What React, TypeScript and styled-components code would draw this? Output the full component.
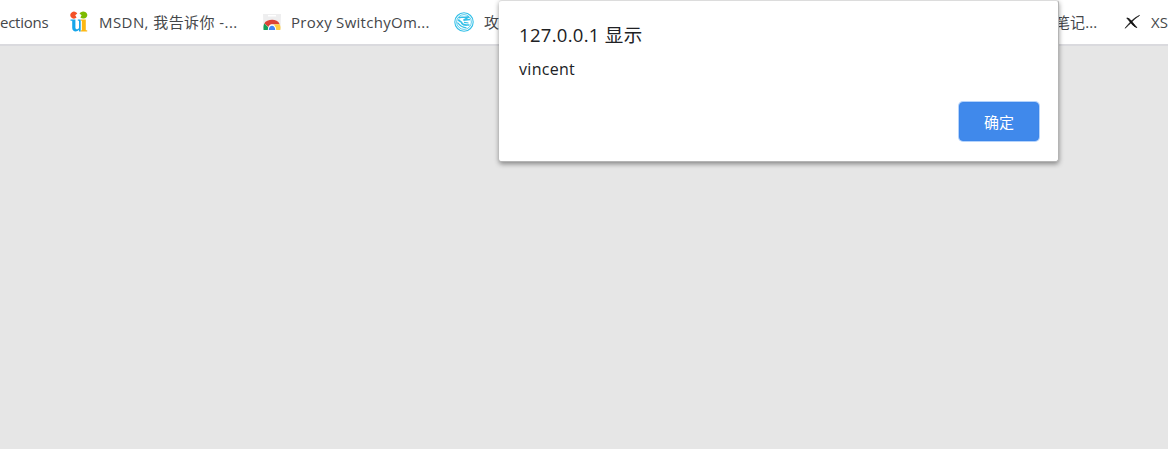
import React from "react";
import styled, { createGlobalStyle } from "styled-components";

const GlobalStyle = createGlobalStyle`
  * { box-sizing: border-box; }
  body {
    margin: 0;
    overflow: hidden;
    background: #e6e6e6;
    font-family: "Open Sans", "Noto Sans CJK SC", sans-serif;
  }
`;

const Page = styled.div`
  position: relative;
  width: 100%;
  height: 100vh;
  overflow: hidden;
  background: #e6e6e6;
`;

const BookmarkBar = styled.nav`
  display: flex;
  justify-content: space-between;
  height: 46px;
  background: #fff;
  border-bottom: 2px solid #dadade;
`;

const Group = styled.div`
  display: flex;
  align-items: center;
  height: 44px;
`;

const Bookmark = styled.div<{ $width: number }>`
  display: flex;
  align-items: center;
  flex: none;
  width: ${(p) => p.$width}px;
  height: 44px;
  overflow: hidden;

  svg {
    display: block;
    flex: none;
    margin-right: 10px;
  }
`;

const Label = styled.span<{ $spacing?: number }>`
  font-size: 15px;
  line-height: 22px;
  letter-spacing: ${(p) => p.$spacing ?? 0}px;
  white-space: nowrap;
  color: #45474a;
`;

const Dialog = styled.section`
  position: absolute;
  top: 0;
  left: 499px;
  display: flex;
  flex-direction: column;
  width: 560px;
  height: 162px;
  padding: 21px 19px 20px 20px;
  background: #fff;
  border: 1px solid #b4b4b4;
  border-width: 1px 1px 1px 0;
  border-top-color: #dcdcdc;
  border-radius: 3px;
  box-shadow: 0 2px 5px rgba(0, 0, 0, 0.42);
`;

const Title = styled.h1`
  margin: 0;
  font-size: 18.5px;
  font-weight: 400;
  line-height: 26px;
  letter-spacing: 0.3px;
  color: #202124;
`;

const Message = styled.p`
  margin: 9px 0 0;
  font-size: 16px;
  line-height: 24px;
  letter-spacing: 0.3px;
  color: #202124;
`;

const Confirm = styled.button`
  align-self: flex-end;
  width: 80px;
  height: 40px;
  margin-top: 21px;
  padding: 0;
  border: 1px solid #3c86ea;
  border-radius: 4px;
  box-shadow: 0 0 0 1px #b5d3fb;
  background: #4089eb;
  color: #fff;
  font: 15px "Noto Sans CJK SC", sans-serif;
`;

const MsdnIcon = () => (
  <svg width="20" height="22" viewBox="0 0 20 22">
    <path d="M6.2 4.2L8.3 2.6A3.7 3.5 0 1 0 7.6 6.6Z" fill="#f45127" />
    <path d="M12.6 4.2L10.5 2.6A4.1 3.5 0 1 1 11.4 6.6Z" fill="#7cbb00" />
    <path d="M1.5 8.4H6.4V16.5C6.4 19 9 18.6 10 17V9.8H8.8V8.4H11.7V20.4H10V18.8C7.6 21.6 3.2 20.6 3.2 17V9.8H1.5Z" fill="#16a5ea" />
    <path d="M11.9 8.4H16.8V19.3H18.2V20.6H11.7V19.3H12.9V9.8H11.9Z" fill="#fdb813" />
  </svg>
);

const ChromeStoreIcon = () => (
  <svg width="18" height="18" viewBox="0 0 18 18">
    <path d="M0 1H18L17.5 17H.5Z" fill="#eeeeef" />
    <path d="M5 2H13V3.5H5Z" fill="#fff" />
    <path d="M1.3 10.4C3.5 6.3 14 4.8 16.7 11.2H9C7 11.2 5.9 12.7 5.7 14Z" fill="#dc4437" />
    <path d="M1.3 10.4C.5 12 .2 14 .6 17H7L5.3 14.2Z" fill="#159e58" />
    <path d="M11.3 11.2H16.7C17.6 13 17.7 15 17.2 17H11.5Z" fill="#ffce42" />
    <path d="M4.8 17C4.8 9.6 13.2 9.6 13.2 17Z" fill="#fff" />
    <path d="M5.8 17C5.8 11.2 12.2 11.2 12.2 17Z" fill="#4287f5" />
  </svg>
);

const WaveIcon = () => (
  <svg width="20" height="20" viewBox="0 0 20 20" fill="none" stroke="#35c0e8">
    <circle cx="10" cy="10" r="9.2" strokeWidth="1.1" />
    <circle cx="10" cy="10" r="7.4" strokeWidth=".8" />
    <path d="M4.5 6C7 4 10 6.3 15 4.8L9.5 8.2L16 7.6" strokeWidth="1.5" />
    <path d="M4.2 7.5C5.5 10 8 9 8 11.5C9.5 13.8 12 12.8 15.5 13" strokeWidth="1.7" />
    <path d="M3.5 10.5C5.5 13 7 15.5 12.5 15.8M10 10.4L14.5 11" strokeWidth="1.1" />
  </svg>
);

const CrossIcon = () => (
  <svg width="17" height="18" viewBox="0 0 17 18" fill="#111">
    <path d="M2.8 5C6.5 5.4 7.8 9 12.8 14.6C8.2 13 6.8 9 2.8 5Z" stroke="#111" strokeWidth=".9" />
    <path d="M15.6 2.4C10.8 4.4 6.5 8.2 1 15.3C5.5 12 9 6.4 15.6 2.4Z" stroke="#111" strokeWidth=".6" />
  </svg>
);

export default function App() {
  return (
    <Page>
      <GlobalStyle />
      <BookmarkBar>
        <Group>
          <Bookmark $width={69}>
            <Label $spacing={-0.25}>ections</Label>
          </Bookmark>
          <Bookmark $width={194}>
            <MsdnIcon />
            <Label $spacing={0.43}>MSDN, 我告诉你 -...</Label>
          </Bookmark>
          <Bookmark $width={191}>
            <ChromeStoreIcon />
            <Label $spacing={0.28}>Proxy SwitchyOm...</Label>
          </Bookmark>
          <Bookmark $width={60}>
            <WaveIcon />
            <Label>攻</Label>
          </Bookmark>
        </Group>
        <Group>
          <Bookmark $width={69}>
            <Label $spacing={0.1}>笔记...</Label>
          </Bookmark>
          <Bookmark $width={44}>
            <CrossIcon />
            <Label>XS</Label>
          </Bookmark>
        </Group>
      </BookmarkBar>
      <Dialog role="dialog">
        <Title>127.0.0.1 显示</Title>
        <Message>vincent</Message>
        <Confirm>确定</Confirm>
      </Dialog>
    </Page>
  );
}
